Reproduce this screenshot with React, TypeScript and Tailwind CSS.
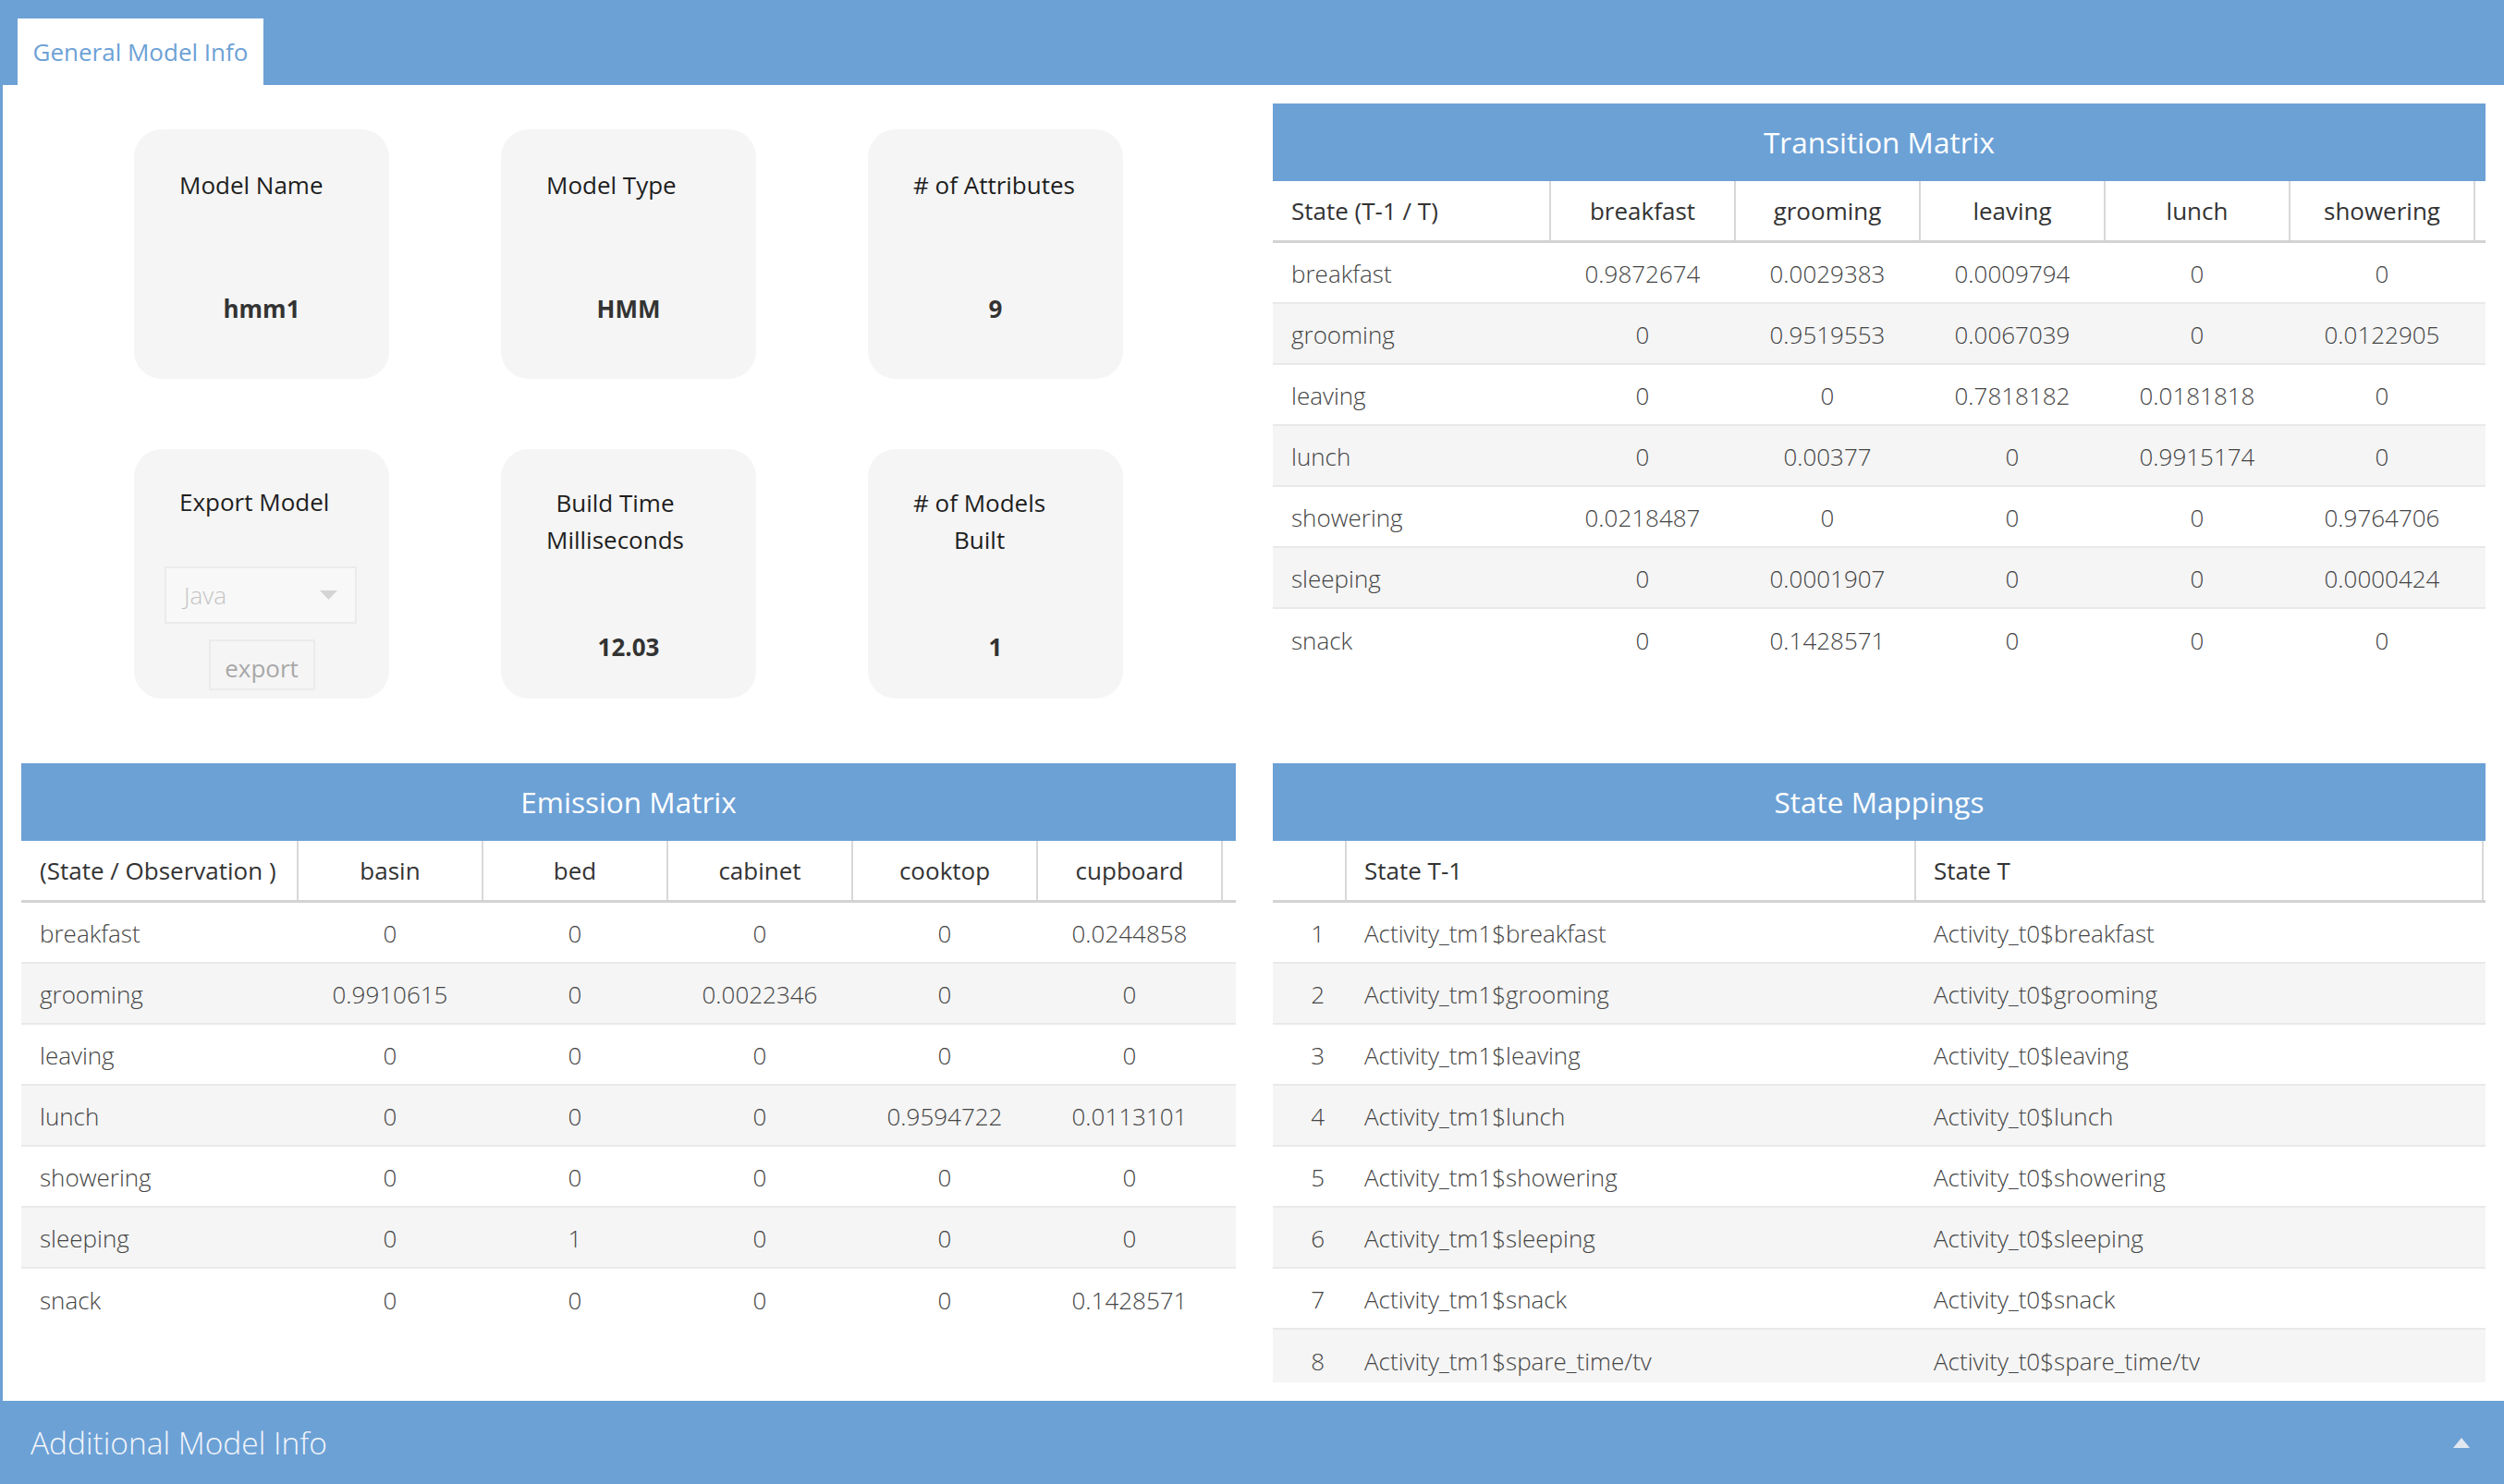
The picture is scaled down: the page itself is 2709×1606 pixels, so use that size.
import React from "react";

const BLUE = "bg-[#6ca1d6]";

const tmCols = ["breakfast", "grooming", "leaving", "lunch", "showering", ""];
const tmRows: [string, string[]][] = [
  ["breakfast", ["0.9872674", "0.0029383", "0.0009794", "0", "0", ""]],
  ["grooming", ["0", "0.9519553", "0.0067039", "0", "0.0122905", ""]],
  ["leaving", ["0", "0", "0.7818182", "0.0181818", "0", ""]],
  ["lunch", ["0", "0.00377", "0", "0.9915174", "0", ""]],
  ["showering", ["0.0218487", "0", "0", "0", "0.9764706", ""]],
  ["sleeping", ["0", "0.0001907", "0", "0", "0.0000424", ""]],
  ["snack", ["0", "0.1428571", "0", "0", "0", ""]],
];

const emCols = ["basin", "bed", "cabinet", "cooktop", "cupboard", ""];
const emRows: [string, string[]][] = [
  ["breakfast", ["0", "0", "0", "0", "0.0244858", ""]],
  ["grooming", ["0.9910615", "0", "0.0022346", "0", "0", ""]],
  ["leaving", ["0", "0", "0", "0", "0", ""]],
  ["lunch", ["0", "0", "0", "0.9594722", "0.0113101", ""]],
  ["showering", ["0", "0", "0", "0", "0", ""]],
  ["sleeping", ["0", "1", "0", "0", "0", ""]],
  ["snack", ["0", "0", "0", "0", "0.1428571", ""]],
];

const mapStates = [
  "breakfast",
  "grooming",
  "leaving",
  "lunch",
  "showering",
  "sleeping",
  "snack",
  "spare_time/tv",
];

function TitleBar({ title }: { title: string }) {
  return (
    <div className={`${BLUE} h-[84px] flex items-center justify-center text-white text-[31.5px] font-normal`}>
      {title}
    </div>
  );
}

function Matrix({
  title,
  corner,
  firstWidth,
  cols,
  rows,
}: {
  title: string;
  corner: string;
  firstWidth: string;
  cols: string[];
  rows: [string, string[]][];
}) {
  return (
    <div className="w-full overflow-hidden">
      <TitleBar title={title} />
      <div className="w-full overflow-hidden">
        <div className="flex h-[67px] border-b-[3px] border-[#d3d3d3] min-w-full w-max text-[#333] text-[26px]">
          <div className={`${firstWidth} shrink-0 flex items-center pl-[20px]`}>{corner}</div>
          {cols.map((c, j) => (
            <div
              key={j}
              className="w-[200px] shrink-0 border-l-2 border-[#d8d8d8] flex items-center justify-center"
            >
              {c}
            </div>
          ))}
        </div>
        {rows.map(([name, vals], i) => (
          <div
            key={name}
            className={`flex h-[66px] min-w-full w-max text-[26px] font-light text-[#444] ${
              i % 2 === 1 ? "bg-[#f5f5f5]" : "bg-white"
            } ${i < rows.length - 1 ? "border-b-2 border-[#e9e9e9]" : ""}`}
          >
            <div className={`${firstWidth} shrink-0 flex items-center pl-[20px] pt-[2px]`}>{name}</div>
            {vals.map((v, j) => (
              <div key={j} className="w-[200px] shrink-0 pl-[2px] pt-[2px] flex items-center justify-center">
                {v}
              </div>
            ))}
          </div>
        ))}
      </div>
    </div>
  );
}

function StateMappings() {
  return (
    <div className="w-full overflow-hidden">
      <TitleBar title="State Mappings" />
      <div className="flex h-[67px] border-b-[3px] border-[#d3d3d3] text-[#333] text-[26px]">
        <div className="w-[78px] shrink-0" />
        <div className="w-[616px] shrink-0 border-l-2 border-[#d8d8d8] flex items-center pl-[19px]">State T-1</div>
        <div className="w-[616px] shrink-0 border-l-2 border-r-2 border-[#d8d8d8] flex items-center pl-[19px]">
          State T
        </div>
      </div>
      <div className="h-[519px] overflow-hidden">
        {mapStates.map((s, i) => (
          <div
            key={s}
            className={`flex h-[66px] text-[26px] font-light text-[#444] ${
              i % 2 === 1 ? "bg-[#f5f5f5]" : "bg-white"
            } ${i < mapStates.length - 1 ? "border-b-2 border-[#e9e9e9]" : ""}`}
          >
            <div className="w-[78px] shrink-0 flex items-center justify-end pr-[22px] pt-[2px]">{i + 1}</div>
            <div className="w-[616px] shrink-0 flex items-center pl-[21px] pt-[2px]">Activity_tm1${s}</div>
            <div className="w-[616px] shrink-0 flex items-center pl-[21px] pt-[2px]">Activity_t0${s}</div>
          </div>
        ))}
      </div>
    </div>
  );
}

function CardTitle({ children, pt }: { children: React.ReactNode; pt: string }) {
  return (
    <div className={`${pt} pl-[49px]`}>
      <div className="inline-block text-center text-[26px] leading-[40px] text-[#1e1e1e]">{children}</div>
    </div>
  );
}

function CardValue({ children, mt }: { children: React.ReactNode; mt: string }) {
  return <div className={`${mt} text-center text-[26px] leading-[40px] font-bold text-[#333]`}>{children}</div>;
}

function Card({ children }: { children: React.ReactNode }) {
  return (
    <div className="flex justify-center">
      <div className="w-[276px] h-[270px] rounded-[30px] bg-[#f5f5f5] overflow-hidden">{children}</div>
    </div>
  );
}

export default function App() {
  return (
    <div className="h-screen w-full flex flex-col bg-white font-['Open_Sans',sans-serif] overflow-hidden">
      {/* Top nav */}
      <div className={`${BLUE} h-[92px] shrink-0 flex items-end pl-[19px]`}>
        <div className="h-[72px] w-[266px] bg-white flex items-center justify-center text-[26px] text-[#6ca1d6]">
          General Model Info
        </div>
      </div>

      {/* Content */}
      <div className="flex-1 min-h-0 border-l-[3px] border-[#6ca1d6] pt-[20px] pl-[20px] pr-[20px] overflow-hidden">
        <div className="grid grid-cols-[1314px_1312px] grid-rows-[714px_auto] gap-x-[40px]">
          {/* Cards */}
          <div className="pt-[28px]">
            <div className="w-[1191px] mx-auto grid grid-cols-3 gap-y-[76px]">
              <Card>
                <CardTitle pt="pt-[40px]">Model Name</CardTitle>
                <CardValue mt="mt-[94px]">hmm1</CardValue>
              </Card>
              <Card>
                <CardTitle pt="pt-[40px]">Model Type</CardTitle>
                <CardValue mt="mt-[94px]">HMM</CardValue>
              </Card>
              <Card>
                <CardTitle pt="pt-[40px]"># of Attributes</CardTitle>
                <CardValue mt="mt-[94px]">9</CardValue>
              </Card>
              <Card>
                <CardTitle pt="pt-[37px]">Export Model</CardTitle>
                <div className="mt-[50px] ml-[33px] w-[208px] h-[62px] border-2 border-[#ebebeb] bg-[#f8f8f8] flex items-center justify-between pl-[19px] pr-[19px]">
                  <span className="text-[26px] font-light text-[#c4c4c4]">Java</span>
                  <svg width="19" height="10" viewBox="0 0 19 10">
                    <polygon points="0,0 19,0 9.5,10" fill="#d4d4d4" />
                  </svg>
                </div>
                <div className="mt-[17px] flex justify-center">
                  <div className="w-[115px] h-[55px] border-2 border-[#ebebeb] flex items-center justify-center pt-[7px] text-[26px] text-[#a8a8a8]">
                    export
                  </div>
                </div>
              </Card>
              <Card>
                <CardTitle pt="pt-[38px]">
                  Build Time
                  <br />
                  Milliseconds
                </CardTitle>
                <CardValue mt="mt-[76px]">12.03</CardValue>
              </Card>
              <Card>
                <CardTitle pt="pt-[38px]">
                  # of Models
                  <br />
                  Built
                </CardTitle>
                <CardValue mt="mt-[76px]">1</CardValue>
              </Card>
            </div>
          </div>

          {/* Transition matrix */}
          <div>
            <Matrix
              title="Transition Matrix"
              corner="State (T-1 / T)"
              firstWidth="w-[299px]"
              cols={tmCols}
              rows={tmRows}
            />
          </div>

          {/* Emission matrix */}
          <div>
            <Matrix
              title="Emission Matrix"
              corner="(State / Observation )"
              firstWidth="w-[298px]"
              cols={emCols}
              rows={emRows}
            />
          </div>

          {/* State mappings */}
          <div>
            <StateMappings />
          </div>
        </div>
      </div>

      {/* Bottom bar */}
      <div className={`${BLUE} h-[90px] shrink-0 flex items-center justify-between pl-[33px] pr-[37px]`}>
        <span className="text-[33.5px] font-light text-[#f3f6fa]">Additional Model Info</span>
        <svg width="18" height="11" viewBox="0 0 18 11">
          <polygon points="9,0 18,11 0,11" fill="#e1e8f0" />
        </svg>
      </div>
    </div>
  );
}
